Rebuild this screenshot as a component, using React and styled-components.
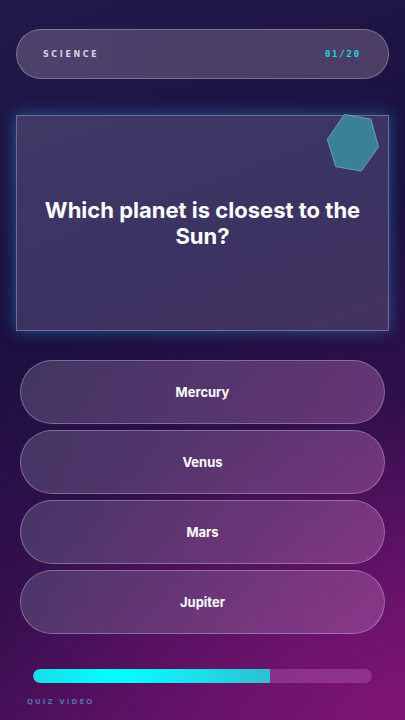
import React from "react";
import styled, { createGlobalStyle } from "styled-components";

const options = ["Mercury", "Venus", "Mars", "Jupiter"];
const progress = 70;

export default function App() {
  return (
    <>
      <GlobalStyle />
      <Screen>
        <TopBar>
          <Category>SCIENCE</Category>
          <Counter>01/20</Counter>
        </TopBar>

        <QuestionCard>
          <Hexagon viewBox="0 0 60 66" aria-hidden="true">
            <polygon
              points="18.7,1.3 47,6.3 55.3,36.3 36.7,62 9.3,57.3 0.3,28"
              fill="#3a8198"
              stroke="#7fb8cc"
              strokeWidth="1"
              strokeOpacity="0.7"
            />
          </Hexagon>
          <Question>Which planet is closest to the Sun?</Question>
        </QuestionCard>

        <OptionList>
          {options.map((label) => (
            <OptionButton key={label}>{label}</OptionButton>
          ))}
        </OptionList>

        <ProgressTrack>
          <ProgressFill style={{ width: `${progress}%` }} />
        </ProgressTrack>
        <Footer>QUIZ VIDEO</Footer>
      </Screen>
    </>
  );
}

const GlobalStyle = createGlobalStyle`
  body {
    margin: 0;
    background: #1c1440;
    font-family: Inter, "Liberation Sans", sans-serif;
  }
`;

const Screen = styled.div`
  position: relative;
  width: 405px;
  height: 720px;
  box-sizing: border-box;
  padding: 29px 16px 0;
  display: flex;
  flex-direction: column;
  overflow: hidden;
  background:
    radial-gradient(ellipse 420px 320px at 100% 100%, rgba(128, 20, 118, 0.95), rgba(128, 20, 118, 0) 100%),
    linear-gradient(160deg, #211a4a 0%, #1b1040 40%, #3a0f52 75%, #5a1262 100%);
`;

const TopBar = styled.div`
  height: 50px;
  box-sizing: border-box;
  border-radius: 25px;
  border: 1px solid rgba(255, 255, 255, 0.28);
  background: linear-gradient(90deg, rgba(88, 78, 118, 0.78), rgba(92, 76, 112, 0.74));
  display: flex;
  align-items: center;
  justify-content: space-between;
  padding: 0 27px 0 26px;
`;

const Category = styled.span`
  font-family: "DejaVu Sans", sans-serif;
  font-weight: bold;
  font-size: 8px;
  letter-spacing: 2.6px;
  color: #d8d2e6;
`;

const Counter = styled.span`
  font-family: "DejaVu Sans Mono", monospace;
  font-weight: bold;
  font-size: 9px;
  letter-spacing: 1.8px;
  color: #1fd6e6;
`;

const QuestionCard = styled.div`
  position: relative;
  margin-top: 36px;
  height: 216px;
  box-sizing: border-box;
  border: 1px solid rgba(180, 175, 215, 0.45);
  background: linear-gradient(160deg, #3f3966 0%, #3b3362 55%, #43325f 100%);
  box-shadow: 0 0 14px rgba(40, 160, 220, 0.5);
  display: flex;
  align-items: center;
  justify-content: center;
  padding: 0 18px;
`;

const Hexagon = styled.svg`
  position: absolute;
  top: -3px;
  right: 9px;
  width: 56px;
  height: 62px;
  transform: translateX(4px);
  overflow: visible;
`;

const Question = styled.h1`
  margin: 0;
  font-family: Inter, "Liberation Sans", sans-serif;
  font-weight: 700;
  font-size: 22px;
  line-height: 26px;
  color: #ffffff;
  text-align: center;
`;

const OptionList = styled.div`
  margin-top: 29px;
  padding: 0 4px;
  display: flex;
  flex-direction: column;
  gap: 6px;
`;

const OptionButton = styled.button`
  height: 64px;
  border-radius: 32px;
  border: 1px solid rgba(255, 255, 255, 0.28);
  background: linear-gradient(100deg, rgba(95, 85, 125, 0.55), rgba(170, 100, 170, 0.45));
  color: #ffffff;
  font-family: Inter, "Liberation Sans", sans-serif;
  font-weight: 700;
  font-size: 13px;
  cursor: pointer;
`;

const ProgressTrack = styled.div`
  margin: 35px 17px 0;
  height: 14px;
  border-radius: 7px;
  background: rgba(190, 110, 190, 0.35);
  overflow: hidden;
`;

const ProgressFill = styled.div`
  height: 100%;
  border-radius: 7px 0 0 7px;
  background: linear-gradient(90deg, #18dfe8 0%, #00ffff 35%, #1ae4ee 65%, #2cbfd2 100%);
`;

const Footer = styled.div`
  margin: 15px 0 0 11px;
  font-family: "DejaVu Sans", sans-serif;
  font-weight: bold;
  font-size: 7px;
  letter-spacing: 2.1px;
  color: #5a6cb2;
`;
